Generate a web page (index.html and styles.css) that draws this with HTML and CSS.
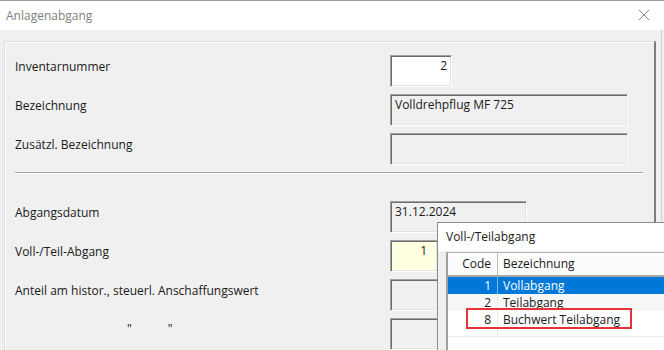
FILE: index.html
```html
<!DOCTYPE html>
<html lang="de">
<head>
<meta charset="utf-8">
<title>Anlagenabgang</title>
<link rel="stylesheet" href="styles.css">
</head>
<body>
<div class="window">
  <div class="titlebar">
    <span class="title">Anlagenabgang</span>
    <svg class="close" width="12" height="12" viewBox="0 0 12 12"><path d="M1 1L11 11M11 1L1 11" stroke="#8a8a8a" stroke-width="1" fill="none"/></svg>
  </div>
  <div class="client">
    <div class="group">
      <div class="row"><span class="label">Inventarnummer</span><div class="field white num w-num">2</div></div>
      <div class="row"><span class="label">Bezeichnung</span><div class="field w-wide">Volldrehpflug MF 725</div></div>
      <div class="row"><span class="label">Zusätzl. Bezeichnung</span><div class="field w-wide"></div></div>
      <div class="sep"></div>
      <div class="row gap-big"><span class="label">Abgangsdatum</span><div class="field w-date">31.12.2024</div></div>
      <div class="row"><span class="label">Voll-/Teil-Abgang</span><div class="field yellow num w-code">1</div></div>
      <div class="row"><span class="label">Anteil am histor., steuerl. Anschaffungswert</span><div class="field w-date"></div></div>
      <div class="row"><span class="label ditto"><span>"</span><span>"</span></span><div class="field w-date"></div></div>
    </div>
    <div class="edge"></div>
  </div>

  <div class="popup">
    <div class="popup-title">Voll-/Teilabgang</div>
    <div class="popup-body">
      <div class="grid">
        <div class="grow head"><span class="c-code">Code</span><span class="c-name">Bezeichnung</span></div>
        <div class="grow sel"><span class="c-code">1</span><span class="c-name">Vollabgang</span></div>
        <div class="grow alt"><span class="c-code">2</span><span class="c-name">Teilabgang</span></div>
        <div class="grow"><span class="c-code">8</span><span class="c-name">Buchwert Teilabgang</span></div>
        <div class="grow empty"><span class="c-code"></span><span class="c-name"></span></div>
      </div>
    </div>
  </div>
  <div class="mark"></div>
</div>
</body>
</html>
```

FILE: styles.css
```css
html, body {
  margin: 0;
  padding: 0;
}
body {
  width: 664px;
  height: 350px;
  overflow: hidden;
  font-family: "Open Sans", "Noto Sans", "DejaVu Sans", sans-serif;
  font-size: 12px;
  color: #1a1a1a;
  background: #f0f0f0;
}
.window {
  position: relative;
  width: 664px;
  height: 350px;
  overflow: hidden;
}
.titlebar {
  height: 28px;
  border-top: 1px solid #9c9c9c;
  background: #ffffff;
  display: flex;
  align-items: center;
  justify-content: space-between;
  padding: 0 14px 1px 6px;
}
.title {
  color: #808080;
  font-size: 12px;
}
.close {
  display: block;
}
.client {
  display: flex;
  height: 321px;
  background: #f0f0f0;
}
.group {
  box-sizing: border-box;
  width: 652px;
  margin: 11px 0 0 4px;
  padding: 13px 10px 0 10px;
  border-left: 1px solid #dadada;
  border-top: 1px solid #dadada;
  border-right: 2px solid #7e7e7e;
  box-shadow: inset 1px 1px 0 #ffffff;
}
.edge {
  width: 5px;
  border-right: 1px solid #cfcfcf;
}
.row {
  display: flex;
  align-items: flex-start;
  height: 32px;
  margin-top: 7px;
}
.row:first-child {
  margin-top: 0;
}
.row.gap-big {
  margin-top: 27px;
}
.label {
  width: 375px;
  flex: none;
  padding-top: 4px;
  line-height: 16px;
  white-space: nowrap;
}
.ditto {
  display: flex;
  gap: 36px;
  padding-left: 112px;
  box-sizing: border-box;
  padding-top: 3px;
}
.field {
  box-sizing: border-box;
  height: 32px;
  padding: 2px 4px 0 4px;
  line-height: 16px;
  background: #f0f0f0;
  border-style: solid;
  border-width: 1px;
  border-color: #a0a0a0 #ffffff #ffffff #a0a0a0;
  box-shadow: inset 1px 1px 0 #6d6d6d, inset -1px -1px 0 #e3e3e3;
  white-space: nowrap;
  overflow: hidden;
}
.field.white {
  background: #ffffff;
}
.field.yellow {
  background: #ffffe1;
}
.field.num {
  text-align: right;
}
.w-num {
  width: 62px;
}
.w-code {
  width: 48px;
  padding-right: 10px;
}
.w-wide {
  width: 238px;
}
.w-date {
  width: 137px;
}
.sep {
  margin: 7px 1px 0 0;
  border-top: 1px solid #a0a0a0;
  border-bottom: 1px solid #ffffff;
}

/* popup list */
.popup {
  position: absolute;
  left: 437px;
  top: 222px;
  width: 240px;
  height: 140px;
  border: 1px solid #8c8c8c;
  background: #f0f0f0;
  box-sizing: border-box;
}
.popup-title {
  height: 28px;
  line-height: 28px;
  padding-left: 8px;
  background: #ffffff;
  color: #1a1a1a;
}
.popup-body {
  padding: 1px 0 0 8px;
}
.grid {
  border-left: 2px solid #a0a0a0;
  border-top: 1px solid #b4b4b4;
  background: #ffffff;
  height: 120px;
}
.grow {
  display: flex;
  height: 17px;
  line-height: 17px;
}
.grow.head {
  height: 22px;
  line-height: 22px;
  background: #fcfcfc;
  border-bottom: 2px solid #a8a8a8;
}
.c-code {
  box-sizing: border-box;
  width: 50px;
  flex: none;
  text-align: right;
  padding-right: 6px;
  border-right: 1px solid #e8e8e8;
}
.head .c-code {
  border-right-color: #bdbdbd;
}
.c-name {
  padding-left: 5px;
  flex: 1;
  white-space: nowrap;
}
.grow.sel {
  background: #0078d7;
  color: #ffffff;
}
.sel .c-code {
  border-right-color: #7fb6e6;
}
.grow.alt {
  background: #f7f7f7;
}
.grow.empty {
  height: 8px;
  border-bottom: 1px solid #ececec;
}

/* annotation */
.mark {
  position: absolute;
  left: 466px;
  top: 308px;
  width: 166px;
  height: 21px;
  box-sizing: border-box;
  border: 2px solid #e5333a;
}
```
